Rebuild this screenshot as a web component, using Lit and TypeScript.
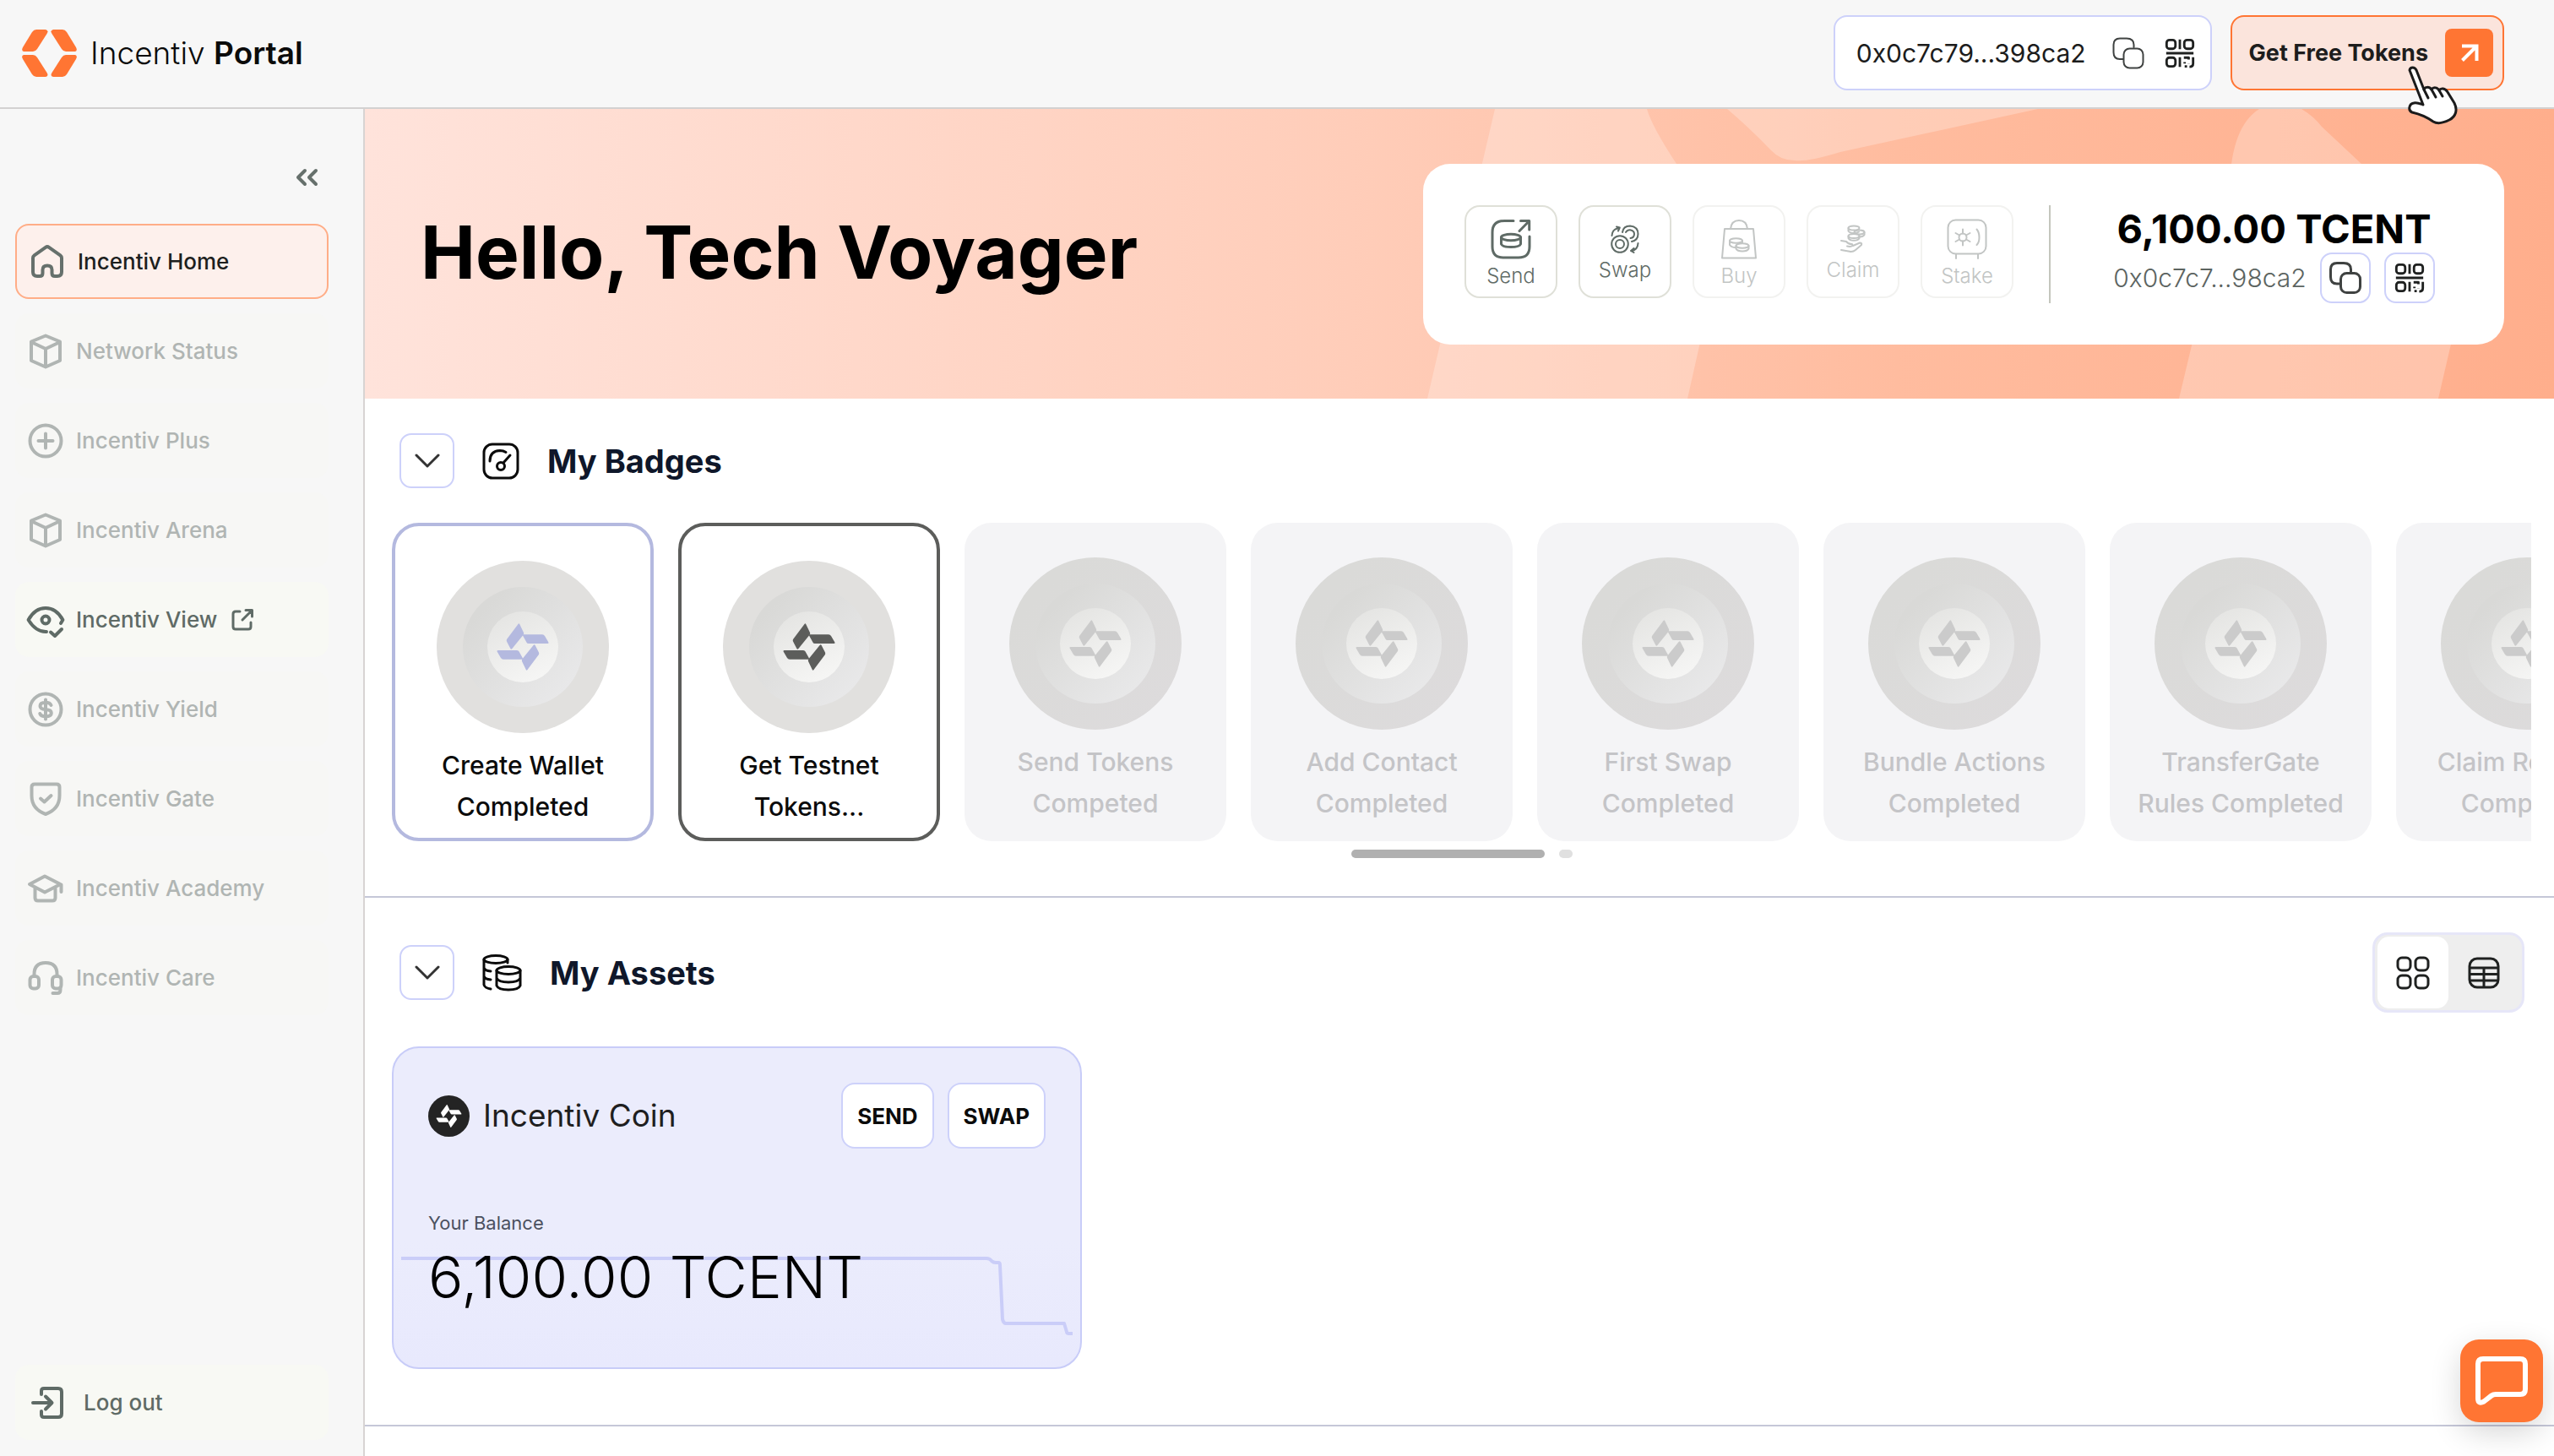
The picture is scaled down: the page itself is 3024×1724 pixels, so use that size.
import { LitElement, html, svg, css, nothing, type TemplateResult } from "lit";
import { customElement, property, state } from "lit/decorators.js";
import { classMap } from "lit/directives/class-map.js";

/* ---------- icons ---------- */

const pinwheel = svg`
  <path d="M-5.5 -27 Q-4.6 -28.5 -3.8 -27 L1 -17 Q1.4 -15.8 .8 -14.6 L-12.6 2 Q-13.8 3.4 -14.6 2 L-19 -6.4 Q-19.6 -7.8 -18.8 -9.2 Z"/>
  <path d="M1 -14.8 H23 Q25 -14.8 26 -13 L30.4 -5.6 Q31 -4.1 29.4 -4.1 H7 Q5 -4.1 4.4 -5.6 L0 -13.4 Q-.4 -14.8 1 -14.8 Z"/>
  <path d="M5.5 27 Q4.6 28.5 3.8 27 L-1 17 Q-1.4 15.8 -.8 14.6 L12.6 -2 Q13.8 -3.4 14.6 -2 L19 6.4 Q19.6 7.8 18.8 9.2 Z"/>
  <path d="M-1 14.8 H-23 Q-25 14.8 -26 13 L-30.4 5.6 Q-31 4.1 -29.4 4.1 H-7 Q-5 4.1 -4.4 5.6 L0 13.4 Q.4 14.8 -1 14.8 Z"/>`;

const cube = svg`<path d="M24 5.5 L41 12.5 V35 L24 42.5 L7 35 V12.5 Z M7 13 L24 21 L41 13 M24 21 V42"/>`;

const navIcons: Record<string, TemplateResult> = {
  home: svg`<path d="M7 19.5 Q7 17.5 8.6 16.3 L22 6.8 Q24 5.4 26 6.8 L39.4 16.3 Q41 17.5 41 19.5 V36 Q41 41 36 41 H33 Q29.5 41 29.5 37.5 V33.5 Q29.5 28.5 24 28.5 Q18.5 28.5 18.5 33.5 V37.5 Q18.5 41 15 41 H12 Q7 41 7 36 Z"/>`,
  cube,
  plus: svg`<circle cx="24" cy="24" r="18.5"/><path d="M24 15.5 V32.5 M15.5 24 H32.5"/>`,
  view: svg`<path d="M25 38 C15 38.5 8 31 3.6 24 C8 16 15 10 24 10 C33 10 40 16 44.4 24 L42 28"/><circle cx="24" cy="24" r="4.5"/><path d="M30 38.5 L35 43 L43 35"/>`,
  dollar: svg`<circle cx="24" cy="24" r="18.5"/><path d="M30.5 19 Q29 15.8 24 15.8 Q17.5 15.8 17.5 19.9 Q17.5 23.5 24 24 Q30.8 24.5 30.8 28.2 Q30.8 32.3 24 32.3 Q18.5 32.3 17.3 29 M24 12.5 V35.5"/>`,
  shield: svg`<path d="M11 6.5 H37 Q40.5 6.5 40.5 10 V20 Q40.5 36 24 42 Q7.5 36 7.5 20 V10 Q7.5 6.5 11 6.5 Z M18 23.5 L22.5 27.5 L30.5 20"/>`,
  cap: svg`<path d="M23 9.5 L41.5 19 L23 28.5 L5 19 Z M11.5 23 V35 Q11.5 38.5 15 38.5 H32 Q35.5 38.5 35.5 35 V23 M42.5 19.5 V28"/>`,
  care: svg`<path d="M10.5 22 V19.5 Q10.5 6 24 6 Q37.5 6 37.5 19.5 V22"/><rect x="5.5" y="22" width="10.5" height="14.5" rx="4"/><rect x="32" y="22" width="10.5" height="14.5" rx="4"/><path d="M41.5 36 V38 Q41.5 42 38 42 H32.5"/>`,
  logout: svg`<path d="M17 14 V10 Q17 7 20 7 H37 Q41 7 41 11 V37 Q41 41 37 41 H20 Q17 41 17 38 V34 M7 24 H29 M22 16.5 L29.5 24 L22 31.5"/>`,
};

const copyIcon = html`<svg class="line" viewBox="0 0 40 40" aria-hidden="true">
  <path d="M14 27 H10 Q2.5 27 2.5 19 V10 Q2.5 2.5 10 2.5 H18 Q26.5 2.5 26.5 10 V13"/>
  <rect x="14.5" y="14.5" width="23" height="23" rx="7"/>
</svg>`;

const qrIcon = html`<svg class="line qr" viewBox="0 0 40 40" aria-hidden="true">
  <rect x="3.5" y="3.5" width="11" height="11" rx="3.5"/>
  <rect x="25.5" y="3.5" width="11" height="11" rx="3.5"/>
  <rect x="3.5" y="25.5" width="11" height="11" rx="3.5"/>
  <path d="M20 3 V15 M3 20 H37 M20 25 V37 M25 25.5 H31 V28 M36.5 25 V33 Q36.5 37 32 37 M26 31 V33 M29 36.5 H26 M31 32.5 V33"/>
</svg>`;

const actionIcons: Record<string, TemplateResult> = {
  Send: html`<svg class="glyph" viewBox="0 0 48 48" aria-hidden="true">
    <path d="M27 2.5 H16 Q2 2.5 2 16 V33 Q2 46 15 46 H33 Q46 46 46 33 V21 M34 14.5 L45.5 2.8 M35.5 2.5 H45.7 V13"/>
    <ellipse cx="24" cy="22" rx="11.5" ry="3.8"/><path d="M12.5 22 V30 Q14 33.5 24 33.5 Q34 33.5 35.5 30 V22"/></svg>`,
  Swap: html`<svg class="glyph small" viewBox="0 0 34 34" aria-hidden="true">
    <circle cx="11" cy="23" r="9.8"/><circle cx="11" cy="23" r="5"/>
    <path d="M14 9 Q15 1.5 23 1.5 Q32.5 2.5 32.5 11 Q32.5 18.5 25 20 M18 9 Q20 6 23 6.2 Q28 7 28 11 Q28 15.5 23.5 16 M1.5 13 Q2 5.5 8.5 4.5 M7 2.5 L10.8 3.5 L9 7.5 M32.5 22 Q32 29.5 25.5 31 M27.5 28 L24 31 L27.5 33"/></svg>`,
  Buy: html`<svg class="glyph" viewBox="0 0 48 48" aria-hidden="true">
    <path d="M7 12 H41 L44 46.5 H4 Z M14 12 Q15 2 24 2 Q33 2 34 12"/>
    <ellipse cx="20.5" cy="26" rx="7.5" ry="2.8"/><path d="M13 26 V31 Q15 34 20 34 M28 26 V29"/>
    <ellipse cx="28" cy="32" rx="7.5" ry="2.8"/><path d="M20.5 32 V35.5 Q22 38.5 28 38.5 Q34 38.5 35.5 35.5 V32"/></svg>`,
  Claim: html`<svg class="glyph small" viewBox="0 0 34 34" aria-hidden="true">
    <ellipse cx="18" cy="4" rx="6.5" ry="2.6"/><path d="M11.5 4 V7.5 Q13 10 18 10 Q22 10 24 8.5"/>
    <ellipse cx="24.5" cy="9" rx="6" ry="2.4"/><path d="M30.5 9 V12 Q29 14.5 25 14.5"/>
    <ellipse cx="18" cy="13.5" rx="6.5" ry="2.6"/><path d="M11.5 13.5 V16 Q13 18.8 18 18.8 Q23 18.8 24.5 16 V13"/>
    <path d="M3 19 L9 20 Q12 23.5 16 23 Q18 25.5 13 26 L10 25.5 M17 25 L25 21.5 Q28 21.5 27 24 L20 30 Q17 32.5 13 31.8 L3 30"/></svg>`,
  Stake: html`<svg class="glyph" viewBox="0 0 48 48" aria-hidden="true">
    <rect x="1.5" y="1.5" width="45" height="40" rx="9"/><path d="M11 42 V47 M37 42 V47 M35.5 12.5 Q38.5 16 38.5 22 Q38.5 28 35.5 31"/>
    <circle cx="19" cy="22" r="4.5"/><path d="M19 12.5 V17.5 M19 26.5 V31.5 M10.5 17 L15 19.5 M23 24.5 L27.5 27 M10.5 27 L15 24.5 M23 19.5 L27.5 17"/></svg>`,
};

/* ---------- data ---------- */

interface NavEntry { label: string; icon: string; kind?: "active" | "open" }
const NAV: NavEntry[] = [
  { label: "Incentiv Home", icon: "home", kind: "active" },
  { label: "Network Status", icon: "cube" },
  { label: "Incentiv Plus", icon: "plus" },
  { label: "Incentiv Arena", icon: "cube" },
  { label: "Incentiv View", icon: "view", kind: "open" },
  { label: "Incentiv Yield", icon: "dollar" },
  { label: "Incentiv Gate", icon: "shield" },
  { label: "Incentiv Academy", icon: "cap" },
  { label: "Incentiv Care", icon: "care" },
];

const ACTIONS = [
  { label: "Send", enabled: true },
  { label: "Swap", enabled: true },
  { label: "Buy", enabled: false },
  { label: "Claim", enabled: false },
  { label: "Stake", enabled: false },
];

interface Badge { lines: [string, string]; tone: "lilac" | "dark" | "locked" }
const BADGES: Badge[] = [
  { lines: ["Create Wallet", "Completed"], tone: "lilac" },
  { lines: ["Get Testnet", "Tokens..."], tone: "dark" },
  { lines: ["Send Tokens", "Competed"], tone: "locked" },
  { lines: ["Add Contact", "Completed"], tone: "locked" },
  { lines: ["First Swap", "Completed"], tone: "locked" },
  { lines: ["Bundle Actions", "Completed"], tone: "locked" },
  { lines: ["TransferGate", "Rules Completed"], tone: "locked" },
  { lines: ["Claim Rewards", "Completed"], tone: "locked" },
];

const base = css`
  *, *::before, *::after { box-sizing: border-box; }
  button { font: inherit; color: inherit; background: none; border: 0; padding: 0; cursor: pointer; }
  a { color: inherit; text-decoration: none; }
  svg { display: block; flex: none; }
  h1, h2, h3, p { margin: 0; font-weight: inherit; }
  .line { fill: none; stroke: #3f4241; stroke-width: 3; stroke-linecap: round; stroke-linejoin: round; }
  .qr { stroke: #1f2120; stroke-linecap: butt; }
`;

/* ---------- header ---------- */

@customElement("portal-header")
export class PortalHeader extends LitElement {
  static styles = [base, css`
    :host { display: block; }
    .bar { display: flex; align-items: center; justify-content: space-between; height: 129px; padding: 0 59px 2px 26px; background: #f7f7f7; border-bottom: 2px solid #d3d1d1; }
    .brand { display: flex; align-items: center; gap: 16px; font-size: 37px; line-height: 44px; color: #0b0b0b; font-weight: 300; }
    .brand b { font-weight: 600; }
    .mark { width: 65px; height: 56px; fill: #ff7533; }
    .tools { display: flex; align-items: center; gap: 22px; }
    .address { display: flex; align-items: center; height: 89px; padding: 0 17px 0 25px; border: 2px solid #cdd1fa; border-radius: 16px; background: #fff; font-size: 30px; color: #1c1c1c; }
    .address .copy { margin-left: 30px; }
    .address .scan { margin-left: 22px; }
    .address .line { width: 40px; height: 40px; stroke-width: 2; }
    .address .qr { width: 38px; height: 38px; stroke-width: 3; }
    .get { position: relative; display: flex; align-items: center; gap: 20px; height: 89px; padding: 0 11px 0 20px; border: 2px solid #ff7533; border-radius: 16px; background: #fbe4dc; font-size: 27px; font-weight: 700; color: #1d1d1d; }
    .go { display: grid; place-items: center; width: 57px; height: 57px; border-radius: 8px; background: #ff7533; }
    .go svg { width: 24px; height: 24px; fill: none; stroke: #fff; stroke-width: 4; }
    .pointer { position: absolute; z-index: 2; right: 51px; top: 58px; width: 62px; height: 70px; fill: #fff; stroke: #1b1b1b; stroke-width: 3; stroke-linejoin: round; stroke-linecap: round; }
  `];

  render() {
    return html`
      <header class="bar">
        <a class="brand" href="#home">
          <svg class="mark" viewBox="0 0 65 56" aria-hidden="true">
            <path d="M17 0 H28 Q32 1 29.5 5 L18 23 Q16 26 13 26 H2 Q-1 25 1 21 L12 3 Q14 0 17 0 Z"/>
            <path d="M48 0 H37 Q33 1 35.5 5 L47 23 Q49 26 52 26 H63 Q66 25 64 21 L53 3 Q51 0 48 0 Z"/>
            <path d="M17 56 H28 Q32 55 29.5 51 L18 33 Q16 30 13 30 H2 Q-1 31 1 35 L12 53 Q14 56 17 56 Z"/>
            <path d="M48 56 H37 Q33 55 35.5 51 L47 33 Q49 30 52 30 H63 Q66 31 64 35 L53 53 Q51 56 48 56 Z"/>
          </svg>
          <span>Incentiv <b>Portal</b></span>
        </a>
        <div class="tools">
          <div class="address">
            <span>0x0c7c79...398ca2</span>
            <button class="copy" aria-label="Copy address">${copyIcon}</button>
            <button class="scan" aria-label="Show QR code">${qrIcon}</button>
          </div>
          <button class="get">
            <span>Get Free Tokens</span>
            <span class="go"><svg viewBox="0 0 24 24" aria-hidden="true"><path d="M3 3.5 H20.5 V21 M20 4 L3.5 20.5"/></svg></span>
            <svg class="pointer" viewBox="0 0 62 70" aria-hidden="true">
              <path d="M3 5 C4 1 9 1 11 5 L20 28 C21 25 26 24 29 28 C31 25 36 25 38 29 C40 26 45 26 48 31 L56 44 C60 52 58 60 50 64 C42 68 36 69 31 66 C24 61 15 57 6 55 C1 53 2 45 8 44 C12 43 16 45 19 46 Z"/>
              <path d="M20 28 L25 38 M29 28 L34 37 M38 29 L42 36" fill="none"/>
            </svg>
          </button>
        </div>
      </header>`;
  }
}

/* ---------- sidebar ---------- */

@customElement("portal-sidebar")
export class PortalSidebar extends LitElement {
  static styles = [base, css`
    :host { display: flex; flex-direction: column; padding: 61px 41px 19px 18px; background: #f7f7f7; border-right: 2px solid #d8d4d3; font-size: 26px; font-weight: 500; }
    .collapse { align-self: flex-end; margin: 0 10px 35px 0; }
    .collapse svg { width: 32px; height: 40px; fill: none; stroke: #66706c; stroke-width: 4; stroke-linecap: round; stroke-linejoin: round; }
    nav { display: flex; flex-direction: column; gap: 17px; }
    .item { display: flex; align-items: center; gap: 12px; height: 89px; padding: 0 12px; border-radius: 16px; color: #b0b5b3; background: #f7f7f5; }
    .icon { width: 48px; height: 48px; fill: none; stroke: currentColor; stroke-width: 4; stroke-linejoin: round; stroke-linecap: round; }
    .open, .logout { color: #5f6b66; background: #f8f9f4; }
    .active { border: 2px solid #ffad87; background: #fdf0ec; color: #1d1f1e; }
    .active .icon { color: #66706c; }
    .external { width: 28px; height: 28px; margin-left: 4px; fill: none; stroke: currentColor; stroke-width: 3; stroke-linejoin: round; stroke-linecap: round; }
    .logout { margin-top: auto; padding: 0 14px; gap: 19px; }
  `];

  render() {
    return html`
      <button class="collapse" aria-label="Collapse menu">
        <svg viewBox="0 0 32 40" aria-hidden="true"><path d="M14 12 L6 20 L14 28 M27 12 L19 20 L27 28"/></svg>
      </button>
      <nav>
        ${NAV.map((n) => html`
          <a class=${classMap({ item: true, active: n.kind === "active", open: n.kind === "open" })} href="#${n.icon}">
            <svg class="icon" viewBox="0 0 48 48" aria-hidden="true">${navIcons[n.icon]}</svg>
            <span>${n.label}</span>
            ${n.kind === "open"
              ? html`<svg class="external" viewBox="0 0 28 28" aria-hidden="true"><path d="M11 4 H6 Q3 4 3 7 V22 Q3 25 6 25 H21 Q24 25 24 22 V17 M14 14 L25 3 M18 2.5 H25.5 V10"/></svg>`
              : nothing}
          </a>`)}
      </nav>
      <button class="item logout">
        <svg class="icon" viewBox="0 0 48 48" aria-hidden="true">${navIcons.logout}</svg>
        <span>Log out</span>
      </button>`;
  }
}

/* ---------- welcome banner ---------- */

@customElement("welcome-banner")
export class WelcomeBanner extends LitElement {
  static styles = [base, css`
    :host { display: block; }
    .banner { position: relative; display: flex; align-items: center; justify-content: space-between; height: 343px; padding: 0 59px 0 66px; background: linear-gradient(90deg, #ffe3db 0%, #ffcdb9 45%, #ffbc9f 70%, #ffae8c 100%); }
    .shapes { position: absolute; right: 0; top: 0; width: 1400px; height: 343px; fill: #fff; fill-opacity: .25; }
    h1 { position: relative; padding-bottom: 4px; font-size: 87px; line-height: 110px; font-weight: 700; color: #000; }
    .card { position: relative; display: flex; align-items: center; width: 1280px; height: 214px; padding: 0 8px 0 49px; border-radius: 32px; background: #fff; }
    .actions { display: flex; gap: 25px; margin-bottom: 6px; }
    .action { display: flex; flex-direction: column; align-items: center; justify-content: center; gap: 5px; width: 110px; height: 110px; padding-top: 6px; border: 2px solid #dfe0d8; border-radius: 18px; font-size: 24px; line-height: 30px; font-weight: 300; color: #5f6b66; }
    .action[disabled] { color: #c2c5c4; border-color: #f2f2f0; }
    .glyph { width: 48px; height: 48px; fill: none; stroke: currentColor; stroke-width: 3; stroke-linecap: round; stroke-linejoin: round; }
    .action[disabled] .glyph { stroke-width: 2; }
    .small { width: 34px; height: 34px; stroke-width: 2; }
    .rule { width: 2px; height: 116px; margin-left: 42px; background: #c4c6bd; }
    .wallet { flex: 1; display: flex; flex-direction: column; align-items: center; }
    .amount { font-size: 47px; line-height: 56px; font-weight: 700; color: #000; }
    .row { display: flex; align-items: center; gap: 16px; font-size: 30px; font-weight: 300; color: #5c6461; }
    .mini { display: grid; place-items: center; width: 60px; height: 60px; border: 2px solid #cdd1fa; border-radius: 14px; }
    .mini .line { width: 40px; height: 40px; }
    .mini .qr { width: 38px; height: 38px; }
  `];

  render() {
    return html`
      <section class="banner">
        <svg class="shapes" viewBox="1624 129 1400 343" aria-hidden="true">
          <path d="M1770 129 H1950 Q1956 150 1985 194 L2030 330 L1998 472 H1690 Z"/>
          <path d="M2045 129 H2413 L2179 180 Q2140 192 2125 190 Q2108 190 2097 178 Q2070 150 2045 129 Z"/>
          <path d="M2675 129 H2725 Q2740 138 2749 150 L2796 194 L2920 330 L2887 472 H2580 L2640 220 Q2642 150 2675 129 Z"/>
        </svg>
        <h1>Hello, Tech Voyager</h1>
        <div class="card">
          <div class="actions">
            ${ACTIONS.map((a) => html`<button class="action" ?disabled=${!a.enabled}>${actionIcons[a.label]}<span>${a.label}</span></button>`)}
          </div>
          <div class="rule"></div>
          <div class="wallet">
            <p class="amount">6,100.00 TCENT</p>
            <div class="row">
              <span>0x0c7c7...98ca2</span>
              <button class="mini" aria-label="Copy address">${copyIcon}</button>
              <button class="mini" aria-label="Show QR code">${qrIcon}</button>
            </div>
          </div>
        </div>
      </section>`;
  }
}

/* ---------- badge card ---------- */

@customElement("badge-card")
export class BadgeCard extends LitElement {
  @property({ attribute: false }) badge!: Badge;

  static styles = [base, css`
    :host { display: block; }
    .card { display: flex; flex-direction: column; align-items: center; gap: 14px; height: 377px; padding-top: 41px; border-radius: 32px; font-size: 30px; line-height: 49px; font-weight: 500; text-align: center; }
    .lilac { border: 4px solid #b4b9df; color: #0b0b0b; }
    .dark { border: 4px solid #5c5d5b; color: #0b0b0b; }
    .locked { background: #f4f4f6; color: #c4c4c7; }
    .medal { width: 204px; height: 204px; }
    .lilac .pin { fill: #b4b9df; }
    .dark .pin { fill: #5c5d5b; }
    .locked .pin { fill: #cbcbcb; }
    .outer { fill: #e1e0de; }
    .locked .outer { fill: url(#rim); }
    .text { display: flex; flex-direction: column; white-space: nowrap; }
  `];

  render() {
    const { lines, tone } = this.badge;
    return html`
      <article class="card ${tone}">
        <svg class="medal" viewBox="-102 -102 204 204" aria-hidden="true">
          <defs>
            <linearGradient id="rim" x1="0" y1="0" x2="1" y2="1"><stop offset=".2" stop-color="#dadad8"/><stop offset=".9" stop-color="#dddbdc"/></linearGradient>
            <linearGradient id="dish" x1=".1" y1=".1" x2=".9" y2=".9"><stop offset=".1" stop-color="#d9d9d7"/><stop offset="1" stop-color="#e9e9ea"/></linearGradient>
            <linearGradient id="core" x1=".2" y1="0" x2=".7" y2="1"><stop offset="0" stop-color="#e4e4e2"/><stop offset="1" stop-color="#f6f6f5"/></linearGradient>
          </defs>
          <circle class="outer" r="102"/>
          <circle r="71" fill="url(#dish)"/>
          <circle r="42" fill="url(#core)"/>
          <g class="pin">${pinwheel}</g>
        </svg>
        <div class="text"><span>${lines[0]}</span><span>${lines[1]}</span></div>
      </article>`;
  }
}

/* ---------- page ---------- */

@customElement("app-root")
export class AppRoot extends LitElement {
  @state() private view: "grid" | "table" = "grid";

  static styles = [base, css`
    :host { display: grid; grid-template-rows: auto 1fr; min-height: 100vh; font-family: Inter, "Liberation Sans", sans-serif; background: #fff; color: #0b0b0b; }
    portal-header { position: relative; z-index: 2; }
    .body { display: grid; grid-template-columns: 432px minmax(0, 1fr); }
    .section { padding: 41px 27px 45px 32px; border-bottom: 2px solid #c5c7d8; }
    .assets { padding-bottom: 66px; }
    .head { display: flex; align-items: center; gap: 33px; margin-bottom: 41px; padding: 0 8px 0 9px; }
    .assets .head { margin-bottom: 40px; }
    h2 { font-size: 38px; line-height: 48px; font-weight: 700; color: #0f172a; }
    .fold { display: grid; place-items: center; width: 65px; height: 65px; border: 2px solid #cdd1fa; border-radius: 14px; }
    .fold svg { width: 32px; height: 20px; fill: none; stroke: #333; stroke-width: 3; stroke-linecap: round; stroke-linejoin: round; }
    .topic { height: 44px; fill: none; stroke: #0b0b0b; stroke-width: 3; stroke-linecap: round; stroke-linejoin: round; }
    .track { display: grid; grid-auto-flow: column; grid-auto-columns: 310px; gap: 29px; overflow: hidden; }
    .pager { display: flex; justify-content: center; gap: 17px; margin-top: 10px; }
    .page { height: 10px; width: 16px; border-radius: 5px; background: #e0e0e0; }
    .current { width: 229px; background: #b0b0b0; }
    .switch { display: flex; margin-left: auto; padding: 2px 3px; width: 180px; height: 95px; border: 3px solid #e6e6f8; border-radius: 18px; background: #eee; }
    .mode { flex: 1; display: grid; place-items: center; border-radius: 14px; }
    .on { background: #fff; }
    .mode svg { width: 40px; height: 40px; fill: none; stroke: #1f2120; stroke-width: 3; }
    .coin { position: relative; width: 817px; padding: 41px 41px 59px; border: 2px solid #c8ccf8; border-radius: 32px; background: linear-gradient(#ebecfc 60%, #e8e9fd); }
    .chart { position: absolute; inset: 0; width: 100%; height: 100%; fill: none; stroke: #cacdf8; stroke-width: 4; stroke-linejoin: round; }
    .coin-head { position: relative; display: flex; align-items: center; gap: 16px; }
    .coin-mark { width: 49px; height: 49px; }
    h3 { flex: 1; font-size: 37px; line-height: 48px; font-weight: 400; color: #1f1f1f; }
    .pill { height: 78px; padding: 0 17px; border: 2px solid #cdd1fa; border-radius: 16px; background: #fff; font-size: 26px; font-weight: 700; color: #0b0b0b; }
    .label { position: relative; margin-top: 72px; font-size: 22px; line-height: 32px; color: #4b5160; }
    .balance { position: relative; font-size: 69px; line-height: 96px; font-weight: 300; color: #000; }
    .chat { position: fixed; right: 13px; bottom: 40px; display: grid; place-items: center; width: 98px; height: 98px; border-radius: 22px; background: #ff7533; box-shadow: 0 12px 36px rgba(0, 0, 0, .16); }
    .chat svg { width: 66px; height: 62px; fill: none; stroke: #fff; stroke-width: 6; stroke-linejoin: round; }
  `];

  private fold(name: string) {
    return html`<button class="fold" aria-label="Toggle ${name}"><svg viewBox="0 0 32 20" aria-hidden="true"><path d="M3 3 L16 16 L29 3"/></svg></button>`;
  }

  render() {
    return html`
      <portal-header></portal-header>
      <div class="body">
        <portal-sidebar></portal-sidebar>
        <main>
          <welcome-banner></welcome-banner>

          <section class="section">
            <div class="head">
              ${this.fold("My Badges")}
              <svg class="topic" viewBox="0 0 44 44" aria-hidden="true">
                <rect x="2" y="2" width="40" height="40" rx="10"/>
                <path d="M9 22 Q9 10 21 9.5 Q25 9.5 28 11.5 M33 15 L25 24"/><circle cx="22" cy="28" r="4.5"/>
              </svg>
              <h2>My Badges</h2>
            </div>
            <div class="track">
              ${BADGES.map((b) => html`<badge-card .badge=${b}></badge-card>`)}
            </div>
            <div class="pager"><span class="page current"></span><span class="page"></span></div>
          </section>

          <section class="section assets">
            <div class="head">
              ${this.fold("My Assets")}
              <svg class="topic" viewBox="0 0 47 44" aria-hidden="true">
                <ellipse cx="16" cy="6" rx="14" ry="4.5"/>
                <path d="M2 6 V36 Q3 40 10 41 M30 6 V10 M2 16 Q3 19.5 10 20 M2 26 Q3 29.5 10 30"/>
                <ellipse cx="31" cy="19" rx="14" ry="4.5"/>
                <path d="M17 19 V37 Q19 42 31 42 Q43 42 45 37 V19 M17 28 Q19 33 31 33 Q43 33 45 28"/>
              </svg>
              <h2>My Assets</h2>
              <div class="switch">
                <button class=${classMap({ mode: true, on: this.view === "grid" })} aria-label="Grid view" @click=${() => (this.view = "grid")}>
                  <svg viewBox="0 0 40 40" aria-hidden="true"><rect x="2" y="2" width="15" height="15" rx="5"/><rect x="23" y="2" width="15" height="15" rx="5"/><rect x="2" y="23" width="15" height="15" rx="5"/><rect x="23" y="23" width="15" height="15" rx="5"/></svg>
                </button>
                <button class=${classMap({ mode: true, on: this.view === "table" })} aria-label="Table view" @click=${() => (this.view = "table")}>
                  <svg viewBox="0 0 40 40" aria-hidden="true"><rect x="3" y="3" width="34" height="34" rx="9"/><path d="M3 14 H37 M3 21.5 H37 M3 29 H37 M20 14 V37"/></svg>
                </button>
              </div>
            </div>
            <article class="coin">
              <svg class="chart" viewBox="466 1241 813 378" preserveAspectRatio="none" aria-hidden="true">
                <path d="M475 1490 H1168 Q1172 1490 1174 1493 Q1176 1495 1179 1495 H1182 Q1184 1495 1184 1498 L1187 1562 Q1188 1567 1191 1567 H1260 L1263 1577 Q1263 1579 1266 1579 H1270"/>
              </svg>
              <div class="coin-head">
                <svg class="coin-mark" viewBox="-50 -50 100 100" aria-hidden="true"><circle r="50" fill="#242424"/><g fill="#fff">${pinwheel}</g></svg>
                <h3>Incentiv Coin</h3>
                <button class="pill">SEND</button>
                <button class="pill">SWAP</button>
              </div>
              <p class="label">Your Balance</p>
              <p class="balance">6,100.00 TCENT</p>
            </article>
          </section>
        </main>
      </div>
      <button class="chat" aria-label="Open chat">
        <svg viewBox="0 0 66 62" aria-hidden="true"><path d="M11 5 H55 Q61 5 61 11 V41 Q61 47 55 47 H26 Q23 47 21 48.5 L12 55.5 Q5 59 5 52 V11 Q5 5 11 5 Z"/></svg>
      </button>`;
  }
}
